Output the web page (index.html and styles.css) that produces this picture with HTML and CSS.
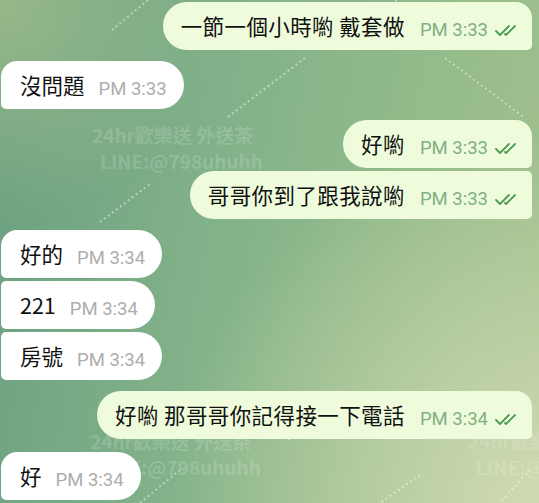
FILE: index.html
```html
<!DOCTYPE html>
<html lang="zh-Hant">
<head>
    <meta charset="UTF-8">
    <meta name="viewport" content="width=device-width, initial-scale=1.0">
    <title>Chat</title>
    <link rel="stylesheet" href="styles.css">
</head>
<body>
    <div class="chat">
        <svg class="wallpaper" width="539" height="503" viewBox="0 0 539 503">
            <g class="dots">
                <line x1="228" y1="117" x2="305" y2="58"/>
                <line x1="445" y1="58" x2="525" y2="118"/>
                <line x1="100" y1="222" x2="150" y2="184"/>
                <line x1="148" y1="0" x2="112" y2="30"/>
                <line x1="395" y1="0" x2="430" y2="25"/>
                <line x1="240" y1="395" x2="290" y2="440"/>
                <line x1="140" y1="503" x2="180" y2="470"/>
                <line x1="420" y1="475" x2="380" y2="503"/>
                <line x1="530" y1="470" x2="500" y2="503"/>
            </g>
            <g class="mark">
                <text x="92" y="143">24hr歡樂送 外送茶</text>
                <text x="100" y="169">LINE:@798uhuhh</text>
                <text x="90" y="449">24hr歡樂送 外送茶</text>
                <text x="98" y="475">LINE:@798uhuhh</text>
                <text x="468" y="449">24hr歡樂送 外送茶</text>
                <text x="476" y="475">LINE:@798uhuhh</text>
            </g>
        </svg>

        <div class="messages">
            <div class="msg out">
                <span class="text">一節一個小時喲 戴套做</span>
                <span class="meta"><span class="time">PM 3:33</span><svg class="check" width="26" height="13" viewBox="0 0 26 13"><path d="M2 7 L6 11 L15 2 M11 10 L12 11 L21 2"/></svg></span>
            </div>
            <div class="msg in first">
                <span class="text">沒問題</span>
                <span class="meta"><span class="time">PM 3:33</span></span>
            </div>
            <div class="msg out first">
                <span class="text">好喲</span>
                <span class="meta"><span class="time">PM 3:33</span><svg class="check" width="26" height="13" viewBox="0 0 26 13"><path d="M2 7 L6 11 L15 2 M11 10 L12 11 L21 2"/></svg></span>
            </div>
            <div class="msg out next">
                <span class="text">哥哥你到了跟我說喲</span>
                <span class="meta"><span class="time">PM 3:33</span><svg class="check" width="26" height="13" viewBox="0 0 26 13"><path d="M2 7 L6 11 L15 2 M11 10 L12 11 L21 2"/></svg></span>
            </div>
            <div class="msg in first">
                <span class="text">好的</span>
                <span class="meta"><span class="time">PM 3:34</span></span>
            </div>
            <div class="msg in next">
                <span class="text">221</span>
                <span class="meta"><span class="time">PM 3:34</span></span>
            </div>
            <div class="msg in next">
                <span class="text">房號</span>
                <span class="meta"><span class="time">PM 3:34</span></span>
            </div>
            <div class="msg out first">
                <span class="text">好喲 那哥哥你記得接一下電話</span>
                <span class="meta"><span class="time">PM 3:34</span><svg class="check" width="26" height="13" viewBox="0 0 26 13"><path d="M2 7 L6 11 L15 2 M11 10 L12 11 L21 2"/></svg></span>
            </div>
            <div class="msg in first last">
                <span class="text">好</span>
                <span class="meta"><span class="time">PM 3:34</span></span>
            </div>
        </div>
    </div>
</body>
</html>
```

FILE: styles.css
```css
body {
    margin: 0;
    font-family: "Noto Sans CJK TC", "Noto Sans", sans-serif;
}
.chat {
    position: relative;
    width: 539px;
    height: 503px;
    overflow: hidden;
    background:
        radial-gradient(circle at 100% 100%, #d0dab2 0, rgba(208, 218, 178, 0) 50%),
        radial-gradient(circle at 0 0, #98b98a 0, rgba(152, 185, 138, 0) 30%),
        linear-gradient(100deg, #6a9f80 0%, #82b289 40%, #96bc8b 75%, #a4c18e 100%);
}
.wallpaper {
    position: absolute;
    left: 0;
    top: 0;
}
.dots line {
    stroke: rgba(255, 255, 255, 0.45);
    stroke-width: 2;
    stroke-dasharray: 2 3;
}
.mark text {
    font-family: "Noto Sans CJK TC", "Noto Sans", sans-serif;
    font-size: 19px;
    font-weight: 700;
    fill: rgba(255, 255, 255, 0.18);
}
.messages {
    position: relative;
    display: flex;
    flex-direction: column;
    padding-top: 2px;
}
.msg {
    display: flex;
    align-items: center;
    height: 48px;
    box-sizing: border-box;
    color: #111;
}
.msg.first {
    margin-top: 11px;
}
.msg.next {
    margin-top: 3px;
}
.msg.last {
    margin-top: 13px;
}
.msg.in {
    align-self: flex-start;
    margin-left: 1px;
    padding: 0 17px 0 19px;
    background: #ffffff;
    border-radius: 16px 24px 24px 5px;
}
.msg.in.next {
    border-radius: 5px 24px 24px 5px;
}
.msg.out {
    align-self: flex-end;
    margin-right: 7px;
    padding: 0 12px 0 18px;
    background: #effcdc;
    border-radius: 24px 16px 5px 24px;
}
.msg.out.next {
    border-radius: 24px 5px 5px 24px;
}
.text {
    font-size: 21.5px;
    line-height: 1;
}
.out .text {
    letter-spacing: 0.4px;
}
.meta {
    display: flex;
    align-items: center;
    margin-left: 14px;
    padding-top: 9px;
}
.out .meta {
    margin-left: 15px;
}
.time {
    font-family: Roboto, "Noto Sans", sans-serif;
    font-size: 18.5px;
    line-height: 1;
    color: #adadad;
}
.out .time {
    color: #7fb082;
}
.check {
    margin-left: 6px;
}
.check path {
    fill: none;
    stroke: #4f9b55;
    stroke-width: 1.8;
    stroke-linecap: round;
    stroke-linejoin: round;
}
```
